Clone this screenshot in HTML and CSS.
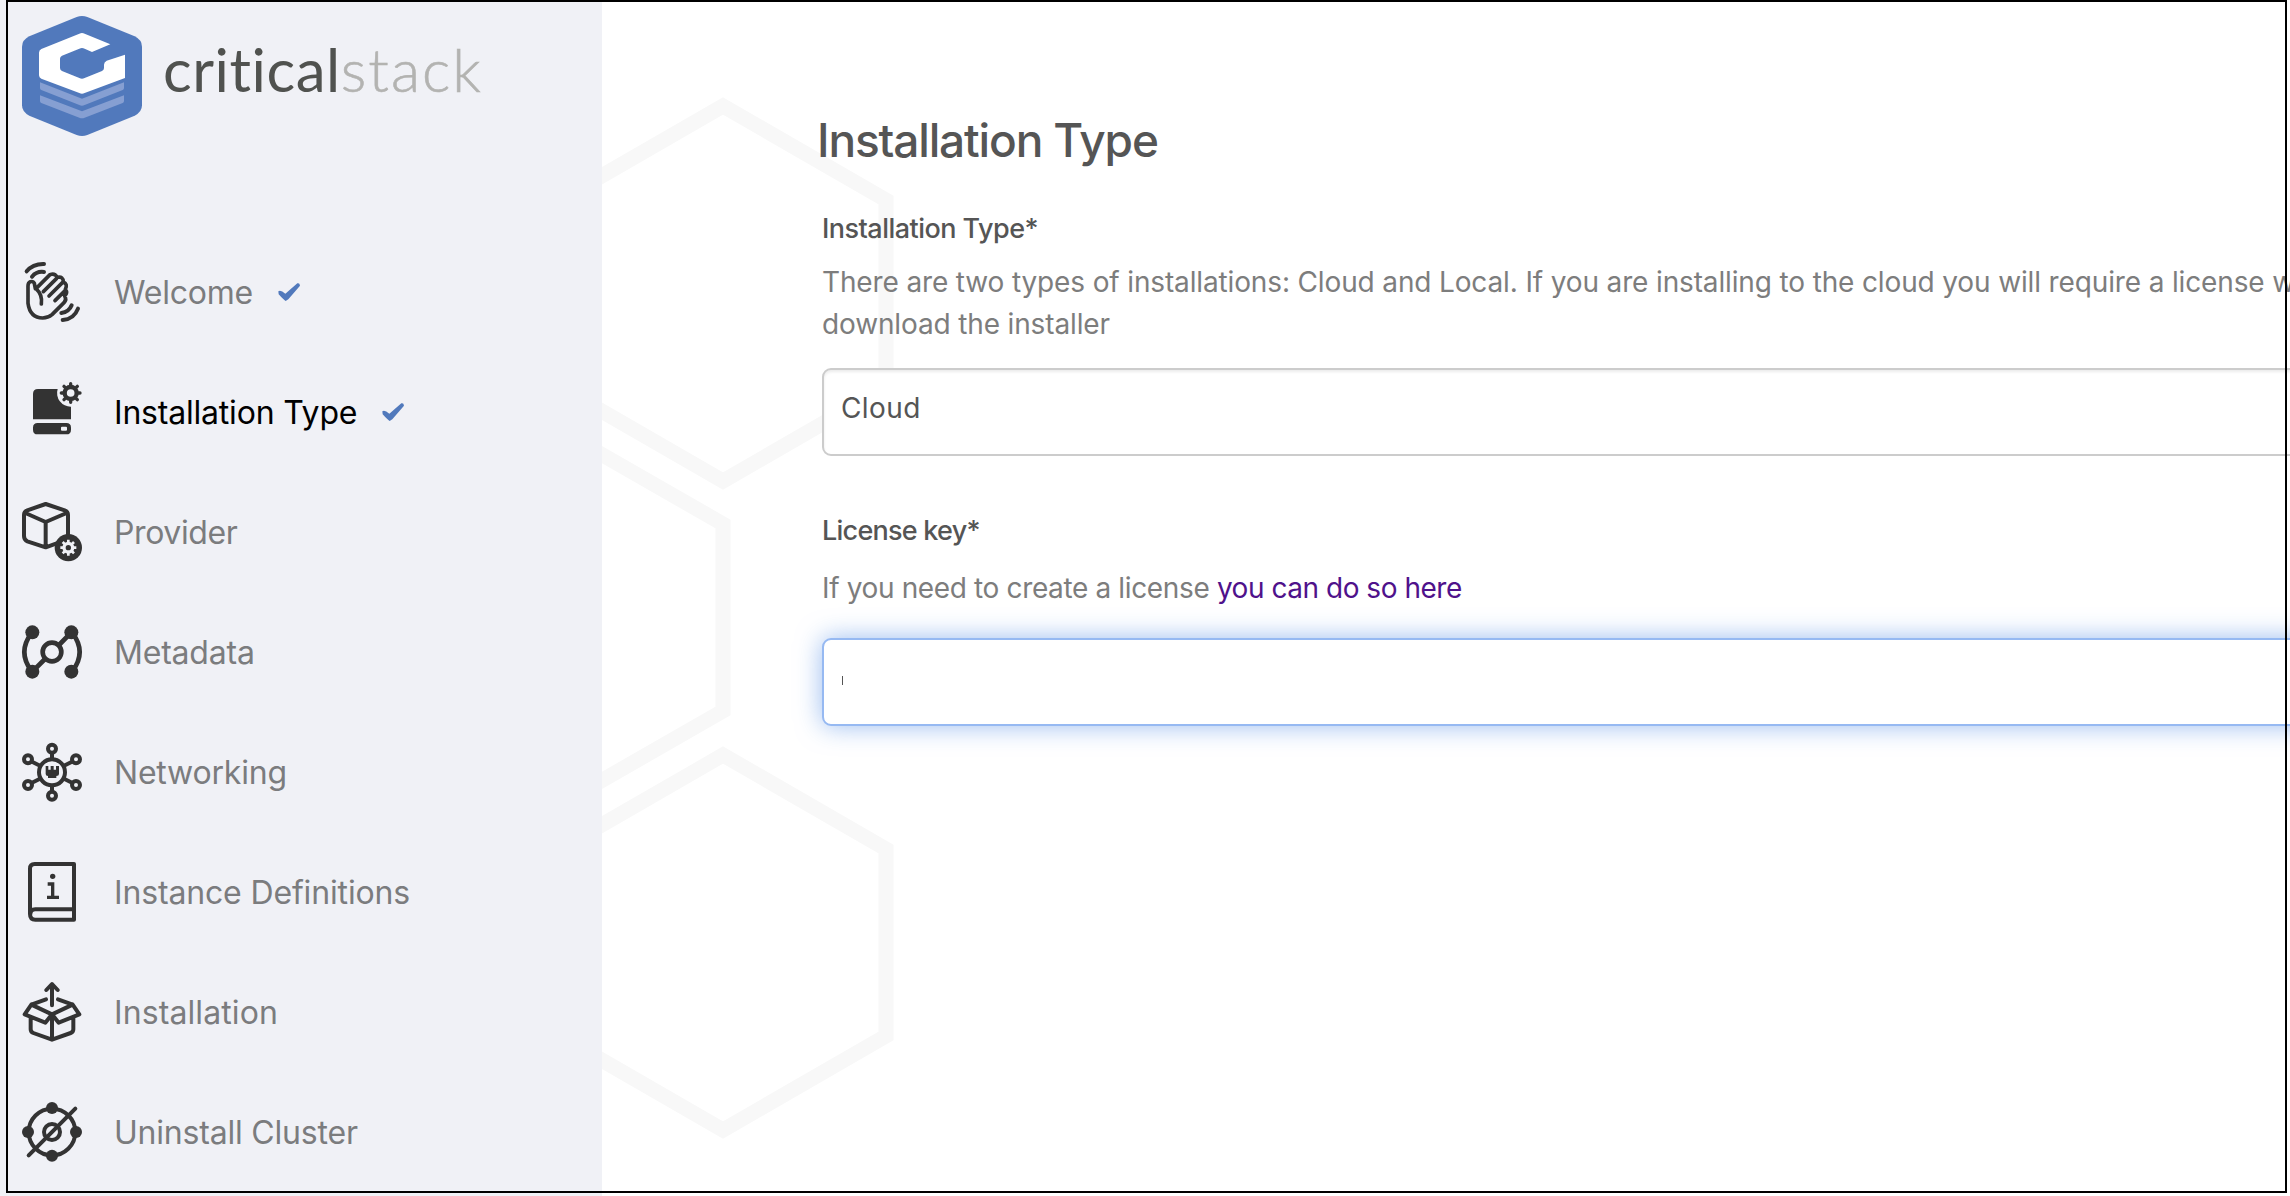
FILE: index.html
```html
<!DOCTYPE html>
<html lang="en">
<head>
<meta charset="utf-8">
<title>Critical Stack - Installation Type</title>
<link rel="stylesheet" href="styles.css">
</head>
<body>
<div class="page">
  <aside class="sidebar">
    <header class="brand">
      <svg class="brand-mark" viewBox="0 0 360 360">
        <path fill="#5179bc" d="M196 3 338 61Q360 72 360 92V268Q360 288 338 299L196 357Q180 363 164 357L22 299Q0 288 0 268V92Q0 72 22 61L164 3Q180-3 196 3Z"/>
        <path fill="#fff" d="M172 53Q180 49 188 53L265 85 210 108 188 98Q180 94 172 98L120 119Q114 122 114 128V156Q114 162 120 165L172 186Q180 190 188 186L240 165Q246 162 246 156V146Q246 138 254 134L309 116V186L188 231Q180 236 172 231L58 188Q51 185 51 178V110Q51 102 58 99Z"/>
        <path fill="#869fd2" d="M54 199 180 248 306 199V216Q306 220 302 222L188 267Q180 271 172 267L58 222Q54 220 54 216ZM54 238 180 286 306 238V255Q306 259 302 261L188 305Q180 309 172 305L58 261Q54 259 54 255Z"/>
      </svg>
      <div class="brand-name"><span class="brand-critical">critical</span><span class="brand-stack">stack</span></div>
    </header>
    <nav class="steps">
      <a class="step">
        <svg class="icon" viewBox="0 0 180 180"><g class="line">
          <path d="M14 28Q33 5 66 6M30 44Q44 27 66 30M168 140Q156 172 122 174M149 130Q141 150 118 153"/>
          <path class="fine" d="M40 80 37 64Q34 57 25 59Q18 62 18 72V124Q24 168 62 168Q78 168 90 158L126 122Q135 112 128 102Q138 92 130 82Q138 66 124 60Q124 42 106 46Q98 32 84 38L42 80Q62 98 58 126M64 89 104 49M81 102 122 61M99 116 130 85"/></g></svg>
        <span class="step-label welcome">Welcome</span>
        <svg class="check" viewBox="0 0 66 54"><path d="M1 25Q8 20 22 32L58 1Q65-1 66 8L31 49 23 54Q16 50 2 34Z"/></svg>
      </a>
      <a class="step active">
        <svg class="icon" viewBox="0 0 180 180">
          <path class="solid" d="M48 21H107A41 41 0 0 0 147 74V112H33V36Q33 21 48 21ZM47 123H133Q147 123 147 137V143Q147 157 133 157H47Q33 157 33 143V137Q33 123 47 123ZM120 134Q117 134 117 137V143Q117 146 120 146H132Q135 146 135 143V137Q135 134 132 134Z" fill-rule="evenodd"/>
          <circle cx="146" cy="33" r="18" fill="none" stroke="#333" stroke-width="13"/>
          <path stroke="#333" stroke-width="10" stroke-linecap="round" d="M146 10V5M146 56V61M123 33H118M169 33H174M130 17 126 13M162 49 166 53M130 49 126 53M162 17 166 13"/>
        </svg>
        <span class="step-label">Installation Type</span>
        <svg class="check" viewBox="0 0 66 54"><path d="M1 25Q8 20 22 32L58 1Q65-1 66 8L31 49 23 54Q16 50 2 34Z"/></svg>
      </a>
      <a class="step">
        <svg class="icon" viewBox="0 0 180 180"><g class="line">
          <path d="M71 6 128 25Q138 29 138 39V100M71 6 16 25Q6 29 6 39V102Q6 114 16 118L71 136 104 124M10 33 71 60 134 33M71 60V136"/></g>
          <circle class="solid" cx="139" cy="137" r="41"/>
          <circle cx="139" cy="137" r="13" fill="none" stroke="#f0f1f6" stroke-width="10"/>
          <path stroke="#f0f1f6" stroke-width="8" d="M139 122V113M139 152V161M124 137H115M154 137H163M129 127 122 120M149 147 156 154M129 147 122 154M149 127 156 120"/>
        </svg>
        <span class="step-label provider">Provider</span>
      </a>
      <a class="step">
        <svg class="icon" viewBox="0 0 180 180">
          <g class="solid"><circle cx="31" cy="31" r="21"/><circle cx="148" cy="31" r="21"/><circle cx="31" cy="149" r="21"/><circle cx="148" cy="149" r="21"/></g>
          <g class="line thick"><circle cx="90" cy="90" r="28"/><path d="M111 69 148 31M69 111 31 149M28 34Q-14 90 28 146M152 34Q194 90 152 146"/></g>
        </svg>
        <span class="step-label">Metadata</span>
      </a>
      <a class="step">
        <svg class="icon" viewBox="0 0 180 180"><g class="line">
          <circle cx="90" cy="91" r="39"/><circle cx="90" cy="20" r="12"/><circle cx="90" cy="161" r="12"/><circle cx="18" cy="52" r="12"/><circle cx="162" cy="52" r="12"/><circle cx="18" cy="129" r="12"/><circle cx="162" cy="129" r="12"/>
          <path d="M90 34V50M90 132V147M30 59 54 71M150 59 126 71M30 122 54 110M150 122 126 110"/></g>
          <path class="solid" d="M71 72H79V83H86V72H95V83H102V72H111V96Q111 102 103 102V108H78V102Q71 102 71 96Z"/>
        </svg>
        <span class="step-label">Networking</span>
      </a>
      <a class="step">
        <svg class="icon" viewBox="0 0 180 180"><g class="line">
          <path d="M156 6H38Q24 6 24 20V156Q24 173 40 173H156ZM156 142H40Q25 142 25 157"/></g>
          <circle class="solid" cx="92" cy="43" r="8"/><path fill="none" stroke="#333" stroke-width="10" d="M77 66H92V106M75 106H111"/>
        </svg>
        <span class="step-label definitions">Instance Definitions</span>
      </a>
      <a class="step">
        <svg class="icon" viewBox="0 0 180 180"><g class="line">
          <path d="M90 70V8M73 24 90 6 107 24M72 52 28 68 8 97 70 122 90 97 28 68M108 52 152 68 172 97 110 122 90 97 152 68M26 108V142Q26 150 34 153L90 173 146 153Q154 150 154 142V108M90 97V173"/></g></svg>
        <span class="step-label installation">Installation</span>
      </a>
      <a class="step">
        <svg class="icon" viewBox="0 0 180 180">
          <g class="line"><circle cx="90" cy="90" r="70"/><circle cx="90" cy="90" r="24"/><path d="M20 160 160 20"/></g>
          <g class="solid"><circle cx="90" cy="18" r="18"/><circle cx="90" cy="161" r="18"/><circle cx="18" cy="90" r="18"/><circle cx="162" cy="90" r="18"/></g>
        </svg>
        <span class="step-label">Uninstall Cluster</span>
      </a>
    </nav>
  </aside>
  <main class="content">
    <svg class="hexagons" viewBox="602 0 300 1196">
      <g fill="none" stroke="#f8f8f8" stroke-width="15">
        <path d="M723 106 886 200V387L723 481 560 387V200Z"/>
        <path d="M559 430 723 524V711L559 805 396 711V524Z"/>
        <path d="M723 755 886 849V1036L723 1130 560 1036V849Z"/>
      </g>
    </svg>
    <form class="form">
      <h1 class="title">Installation Type</h1>
      <label class="label">Installation Type*</label>
      <p class="help">There are two types of installations: Cloud and Local. If you are installing to the cloud you will require a license w<br>download the installer</p>
      <div class="control select">Cloud</div>
      <label class="label license">License key*</label>
      <p class="help create">If you need to create a license <a class="link">you can do so here</a></p>
      <div class="control focused"><span class="caret"></span></div>
    </form>
  </main>
  <div class="frame"></div>
</div>
</body>
</html>
```
FILE: styles.css
```css
* { box-sizing: border-box; }
body { margin: 0; font-family: Inter, "Liberation Sans", sans-serif; overflow: hidden; }
.page { position: relative; display: flex; width: 2290px; height: 1196px; overflow: hidden; background: #fff; }

.sidebar { flex: 0 0 602px; background: #f0f1f6; padding: 16px 0 0 22px; }
.brand { display: flex; height: 120px; margin-bottom: 126px; }
.brand-mark { width: 120px; height: 120px; }
.brand-name { margin-left: 21px; padding-top: 17px; font: 400 60px/72px Lato, sans-serif; white-space: nowrap; }
.brand-critical { color: #50524f; letter-spacing: 0.55px; }
.brand-stack { color: #b3b3b1; font-weight: 300; letter-spacing: 2px; -webkit-text-stroke: 0.6px #b3b3b1; }

.steps { display: flex; flex-direction: column; gap: 60px; }
.step { display: flex; align-items: center; height: 60px; color: #7b7c7e; }
.step.active { color: #000; }
.step-label { margin-left: 32px; padding-top: 2px; font-size: 32px; line-height: 60px; letter-spacing: -0.2px; white-space: nowrap; }
.provider { letter-spacing: -0.4px; }
.definitions { letter-spacing: -0.15px; }
.installation { letter-spacing: 0.1px; }
.icon { width: 60px; height: 60px; flex: none; overflow: visible; }
.solid { fill: #333; }
.line { fill: none; stroke: #333; stroke-width: 12; stroke-linecap: round; stroke-linejoin: round; }
.fine { stroke-width: 11; }
.thick { stroke-width: 14; }
.check { width: 22px; height: 18px; margin-left: 25px; fill: #5179bc; }

.content { position: relative; flex: 1; min-width: 0; overflow: hidden; padding: 112px 0 0 220px; }
.hexagons { position: absolute; left: 0; top: 0; width: 300px; height: 1196px; }
.form { position: relative; display: flex; flex-direction: column; width: 1600px; }
.title { margin: 0 0 43px -5px; font-size: 46px; line-height: 56px; font-weight: 500; letter-spacing: -1.15px; color: #555; }
.label { margin-bottom: 14px; font-size: 27px; line-height: 36px; font-weight: 500; letter-spacing: -0.53px; color: #555; }
.help { margin: 0 0 23px; font-size: 28px; line-height: 42px; letter-spacing: -0.14px; color: #7d7d7d; white-space: nowrap; }
.control { height: 88px; padding: 17px; border: 2px solid #ccc; border-radius: 9px; background: #fff; color: #555; font-size: 28px; line-height: 42px; }
.select { letter-spacing: 0.4px; box-shadow: inset 0 2px 3px rgba(0, 0, 0, 0.08); }
.license { margin: 57px 0 18px; letter-spacing: -0.75px; }
.create { margin-bottom: 29px; letter-spacing: -0.36px; }
.link { color: #4f128b; letter-spacing: -0.47px; }
.focused { padding: 36px 18px; border-color: #96b9f2; box-shadow: 0 0 26px rgba(120, 165, 235, 0.75); }
.caret { display: block; width: 1px; height: 9px; background: #555; }

.frame { position: absolute; left: 6px; top: 0; width: 2281px; height: 1193px; border: 2px solid #000; }
```
